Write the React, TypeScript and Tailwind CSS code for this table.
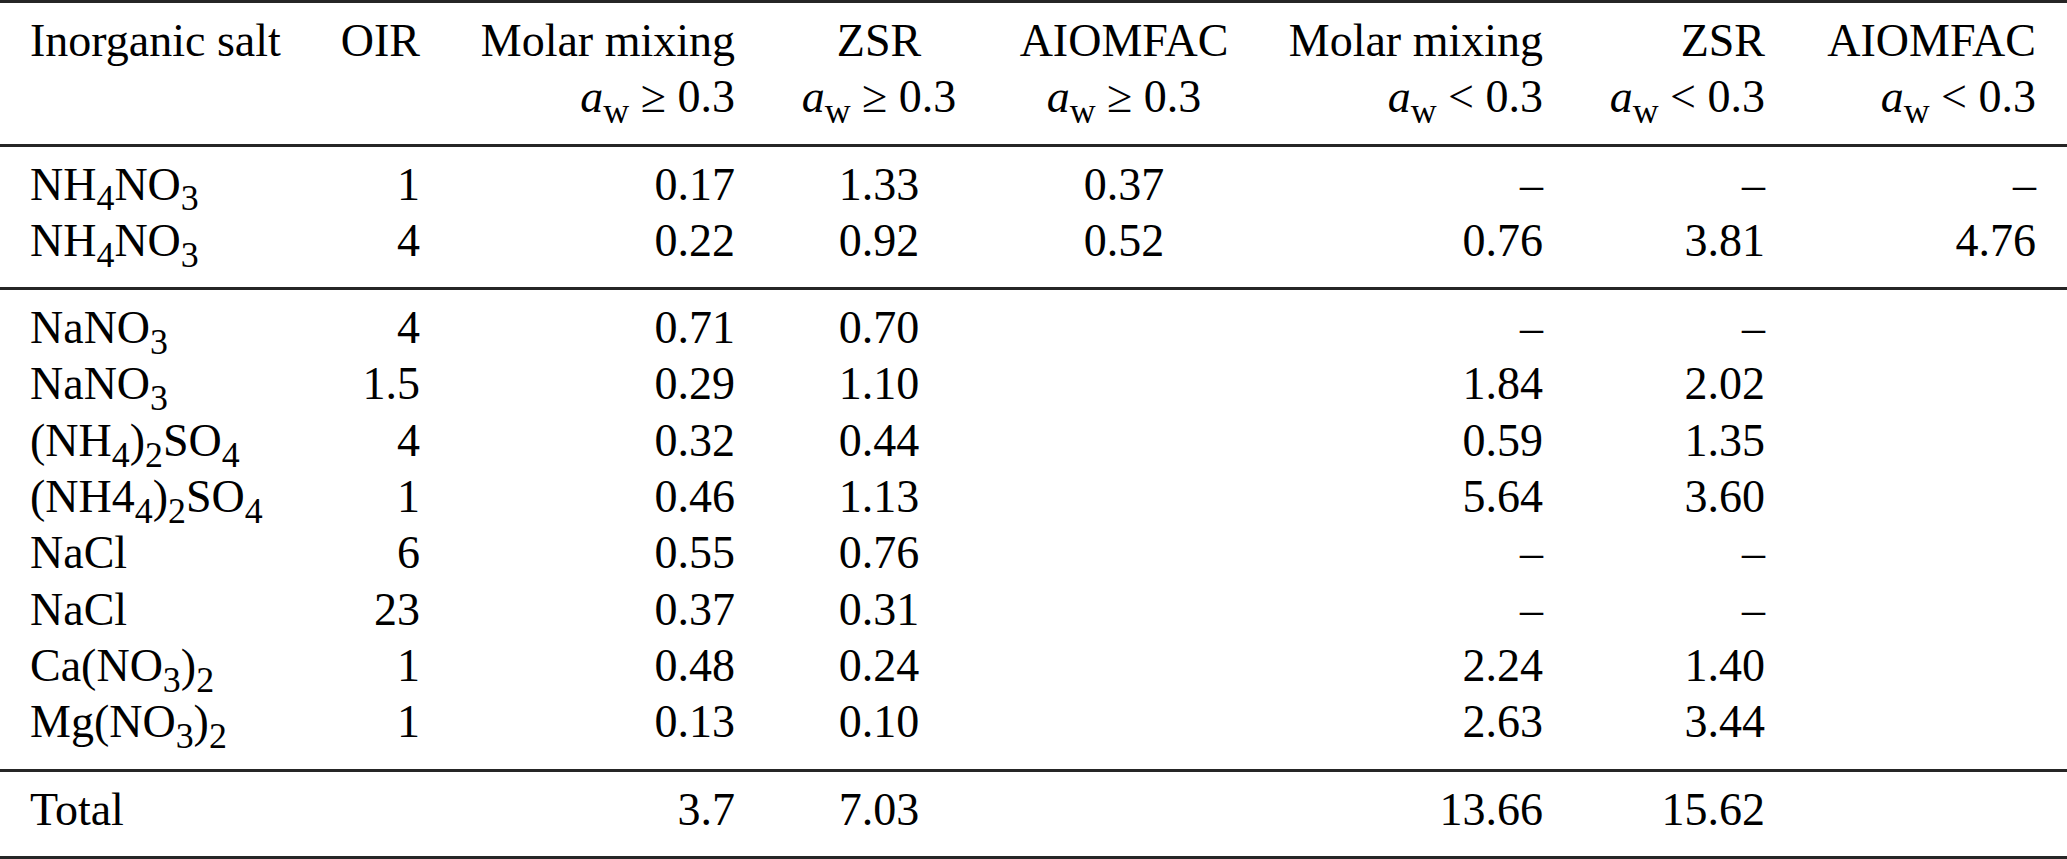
import type { ReactNode } from 'react'

// column boxes: widths picked so right edges / centres land where the table has them
const COLS = [
  'w-[300px] pl-[30px] justify-start',
  'w-[120px] justify-end',
  'w-[315px] justify-end',
  'w-[288px] justify-center',
  'w-[202px] justify-center',
  'w-[318px] justify-end',
  'w-[222px] justify-end',
  'w-[271px] justify-end',
]

function Sub({ children }: { children: ReactNode }) {
  return <sub className="relative bottom-[-0.3em] align-baseline text-[0.78em] leading-[0]">{children}</sub>
}

const geq = (
  <>
    <i>a</i>
    <Sub>w</Sub> ≥ 0.3
  </>
)

const lt = (
  <>
    <i>a</i>
    <Sub>w</Sub> &lt; 0.3
  </>
)

function Row({ cells }: { cells: ReactNode[] }) {
  return (
    <div className="flex h-[56.3px] leading-[56.3px]">
      {cells.map((c, i) => (
        <div key={i} className={`flex shrink-0 whitespace-nowrap ${COLS[i]}`}>
          <span>{c}</span>
        </div>
      ))}
    </div>
  )
}

function Rule() {
  return <div className="h-[3px] bg-[#262626]" />
}

const nh4no3 = (
  <>
    NH<Sub>4</Sub>NO<Sub>3</Sub>
  </>
)
const nano3 = (
  <>
    NaNO<Sub>3</Sub>
  </>
)

const top: ReactNode[][] = [
  [nh4no3, '1', '0.17', '1.33', '0.37', '–', '–', '–'],
  [nh4no3, '4', '0.22', '0.92', '0.52', '0.76', '3.81', '4.76'],
]

const body: ReactNode[][] = [
  [nano3, '4', '0.71', '0.70', '', '–', '–', ''],
  [nano3, '1.5', '0.29', '1.10', '', '1.84', '2.02', ''],
  [
    <>
      (NH<Sub>4</Sub>)<Sub>2</Sub>SO<Sub>4</Sub>
    </>,
    '4', '0.32', '0.44', '', '0.59', '1.35', '',
  ],
  [
    <>
      (NH4<Sub>4</Sub>)<Sub>2</Sub>SO<Sub>4</Sub>
    </>,
    '1', '0.46', '1.13', '', '5.64', '3.60', '',
  ],
  ['NaCl', '6', '0.55', '0.76', '', '–', '–', ''],
  ['NaCl', '23', '0.37', '0.31', '', '–', '–', ''],
  [
    <>
      Ca(NO<Sub>3</Sub>)<Sub>2</Sub>
    </>,
    '1', '0.48', '0.24', '', '2.24', '1.40', '',
  ],
  [
    <>
      Mg(NO<Sub>3</Sub>)<Sub>2</Sub>
    </>,
    '1', '0.13', '0.10', '', '2.63', '3.44', '',
  ],
]

export default function App() {
  return (
    <div className="min-h-screen w-full bg-white font-['Liberation_Serif','Times_New_Roman',serif] text-[46px] text-black">
      <Rule />
      <div className="pt-[10px] pb-[18px]">
        <Row cells={['Inorganic salt', 'OIR', 'Molar mixing', 'ZSR', 'AIOMFAC', 'Molar mixing', 'ZSR', 'AIOMFAC']} />
        <Row cells={['', '', geq, geq, geq, lt, lt, lt]} />
      </div>
      <Rule />
      <div className="pt-[10px] pb-[18px]">
        {top.map((r, i) => (
          <Row key={i} cells={r} />
        ))}
      </div>
      <Rule />
      <div className="pt-[10px] pb-[18px]">
        {body.map((r, i) => (
          <Row key={i} cells={r} />
        ))}
      </div>
      <Rule />
      <div className="pt-[10px] pb-[18px]">
        <Row cells={['Total', '', '3.7', '7.03', '', '13.66', '15.62', '']} />
      </div>
      <Rule />
    </div>
  )
}
